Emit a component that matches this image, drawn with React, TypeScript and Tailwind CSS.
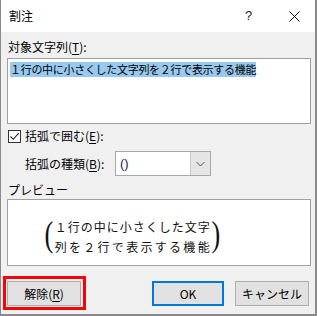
import React from "react";

const JP = "font-['Yu_Gothic_UI','Noto_Sans_CJK_JP',sans-serif]";

function U({ children }: { children: React.ReactNode }) {
  return <span className="underline underline-offset-[2px] decoration-1">{children}</span>;
}

export default function App() {
  return (
    <div className={`w-[317px] h-[316px] bg-white ${JP} text-[12px] text-black leading-[16px]`}>
      <div className="w-[317px] h-[316px] border-l border-r-2 border-b-2 border-[#8a8a8a] flex flex-col">
        {/* Title bar */}
        <div className="h-[32px] bg-white flex items-center pl-[8px] shrink-0">
          <span className="text-[12px] leading-[16px]">割注</span>
          <span className="ml-[212px] text-[13px] leading-[16px] font-['Liberation_Sans',sans-serif] text-[#222]">?</span>
          <svg className="ml-[37px]" width="11" height="11" viewBox="0 0 11 11">
            <path d="M0.5 0.5 L10.5 10.5 M10.5 0.5 L0.5 10.5" stroke="#111" strokeWidth="1" />
          </svg>
        </div>
        {/* Body */}
        <div className="flex-1 bg-[#f0f0f0] pl-[6px] flex flex-col">
          <div className="mt-[7px] h-[16px] pl-[1px]">
            対象文字列(<U>T</U>):
          </div>
          <div className="mt-[3px] w-[304px] h-[66px] bg-white border border-[#a0a0a0] pl-[2px] pt-[2px]">
            <span className="bg-[#99c9ef] text-[11px] leading-[15px] tracking-[-0.3px] inline-block">
              １行の中に小さくした文字列を２行で表示する機能
            </span>
          </div>
          <div className="mt-[4px] h-[16px] flex items-center">
            <div className="ml-[1px] w-[13px] h-[13px] border border-[#333] bg-white flex items-center justify-center">
              <svg width="11" height="11" viewBox="0 0 11 11">
                <path d="M1.5 5.5 L4.3 8.3 L9.7 2.2" fill="none" stroke="#222" strokeWidth="1.1" />
              </svg>
            </div>
            <span className="ml-[4px]">
              括弧で囲む(<U>E</U>):
            </span>
          </div>
          <div className="mt-[7px] h-[25px] flex items-center">
            <span className="ml-[18px] w-[90px]">
              括弧の種類(<U>B</U>):
            </span>
            <div className="w-[96px] h-[25px] border border-[#a8a8a8] bg-white flex">
              <div className="flex-1 pl-[4px] flex items-center font-['Liberation_Sans',sans-serif] text-[13px] text-[#1a1a4a]">
                ()
              </div>
              <div className="w-[20px] h-full bg-[#e5e5e5] border-l border-[#c8c8c8] flex items-center justify-center">
                <svg width="9" height="6" viewBox="0 0 9 6">
                  <path d="M0.5 1 L4.5 5 L8.5 1" fill="none" stroke="#555" strokeWidth="1" />
                </svg>
              </div>
            </div>
          </div>
          <div className="mt-[6px] h-[16px] pl-[1px]">プレビュー</div>
          <div className="mt-[1px] w-[304px] h-[67px] bg-white border border-[#a0a0a0] flex items-center pl-[35px] pt-[8px]">
            <span className="font-['Liberation_Serif',serif] text-[35px] leading-[34px] text-[#111] -mt-[4px] scale-x-75 inline-block">(</span>
            <div className="w-[155px] text-[12px] leading-[20px] text-[#111]">
              <div className="text-justify [text-align-last:justify]">１行の中に小さくした文字</div>
              <div className="text-justify [text-align-last:justify]">列を２行で表示する機能</div>
            </div>
            <span className="font-['Liberation_Serif',serif] text-[35px] leading-[34px] text-[#111] -mt-[4px] scale-x-75 inline-block">)</span>
          </div>
          <div className="mt-[15px] h-[25px] flex">
            <div className="relative w-[74px] h-[25px]">
              <button className="w-full h-full bg-[#e1e1e1] border border-[#adadad] flex items-center justify-center">
                解除(<U>R</U>)
              </button>
              <span className="absolute -left-[4px] -top-[5px] -right-[5px] -bottom-[4px] border-[3px] border-[#ff0000] pointer-events-none" />
            </div>
            <button className="ml-[71px] w-[72px] h-[25px] bg-[#e1e1e1] border-2 border-[#0078d7] flex items-center justify-center">
              OK
            </button>
            <button className="ml-[11px] w-[74px] h-[25px] bg-[#e1e1e1] border border-[#adadad] flex items-center justify-center">
              キャンセル
            </button>
          </div>
        </div>
      </div>
    </div>
  );
}
